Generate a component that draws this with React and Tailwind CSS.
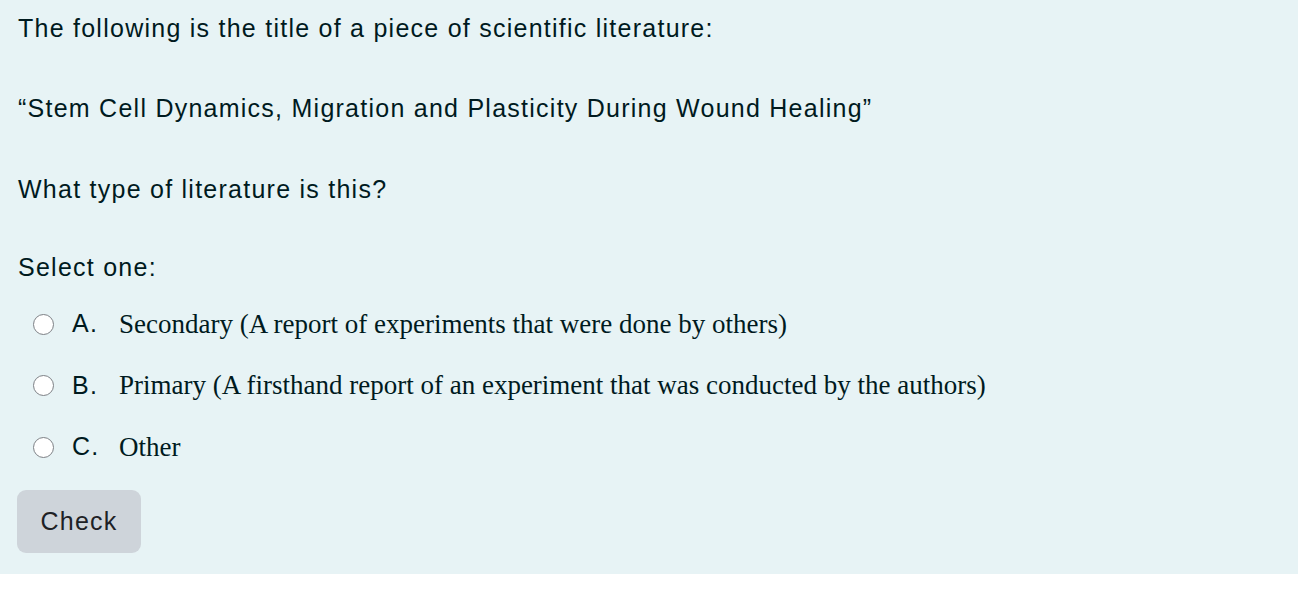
export default function App() {
  const options = [
    ["A.", "Secondary (A report of experiments that were done by others)"],
    ["B.", "Primary (A firsthand report of an experiment that was conducted by the authors)"],
    ["C.", "Other"],
  ];
  return (
    <div className="w-[1298px] h-[590px] bg-white">
      <div className="bg-[#e7f3f5] pl-[18px] pt-[11px] pb-[21px] text-[#001a1e] font-['Liberation_Sans',Arial,sans-serif] tracking-[1.25px]">
        <div className="h-[34px] leading-[34px] text-[25px]">The following is the title of a piece of scientific literature:</div>
        <div className="mt-[46px] h-[34px] leading-[34px] text-[25px]">“Stem Cell Dynamics, Migration and Plasticity During Wound Healing”</div>
        <div className="mt-[47px] h-[34px] leading-[34px] text-[25px]">What type of literature is this?</div>
        <div className="mt-[44px] h-[34px] leading-[34px] text-[25px]">Select one:</div>
        <div className="mt-[20px] flex flex-col gap-[21.5px]">
          {options.map(([l, t]) => (
            <div key={l} className="flex items-center h-[40px]">
              <span className="ml-[15px] w-[21px] h-[21px] rounded-full border-[1.5px] border-[#7d8085] bg-white"></span>
              <span className="ml-[18px] w-[47px] text-[25px]">{l}</span>
              <span className="text-[27px] tracking-normal font-['Liberation_Serif','Times_New_Roman',serif]">{t}</span>
            </div>
          ))}
        </div>
        <button className="mt-[23px] ml-[-1px] w-[124px] h-[63px] rounded-[9px] bg-[#ced4da] text-[#1d2125] text-[25px] tracking-[1.2px] font-['Liberation_Sans',Arial,sans-serif]">Check</button>
      </div>
    </div>
  );
}
